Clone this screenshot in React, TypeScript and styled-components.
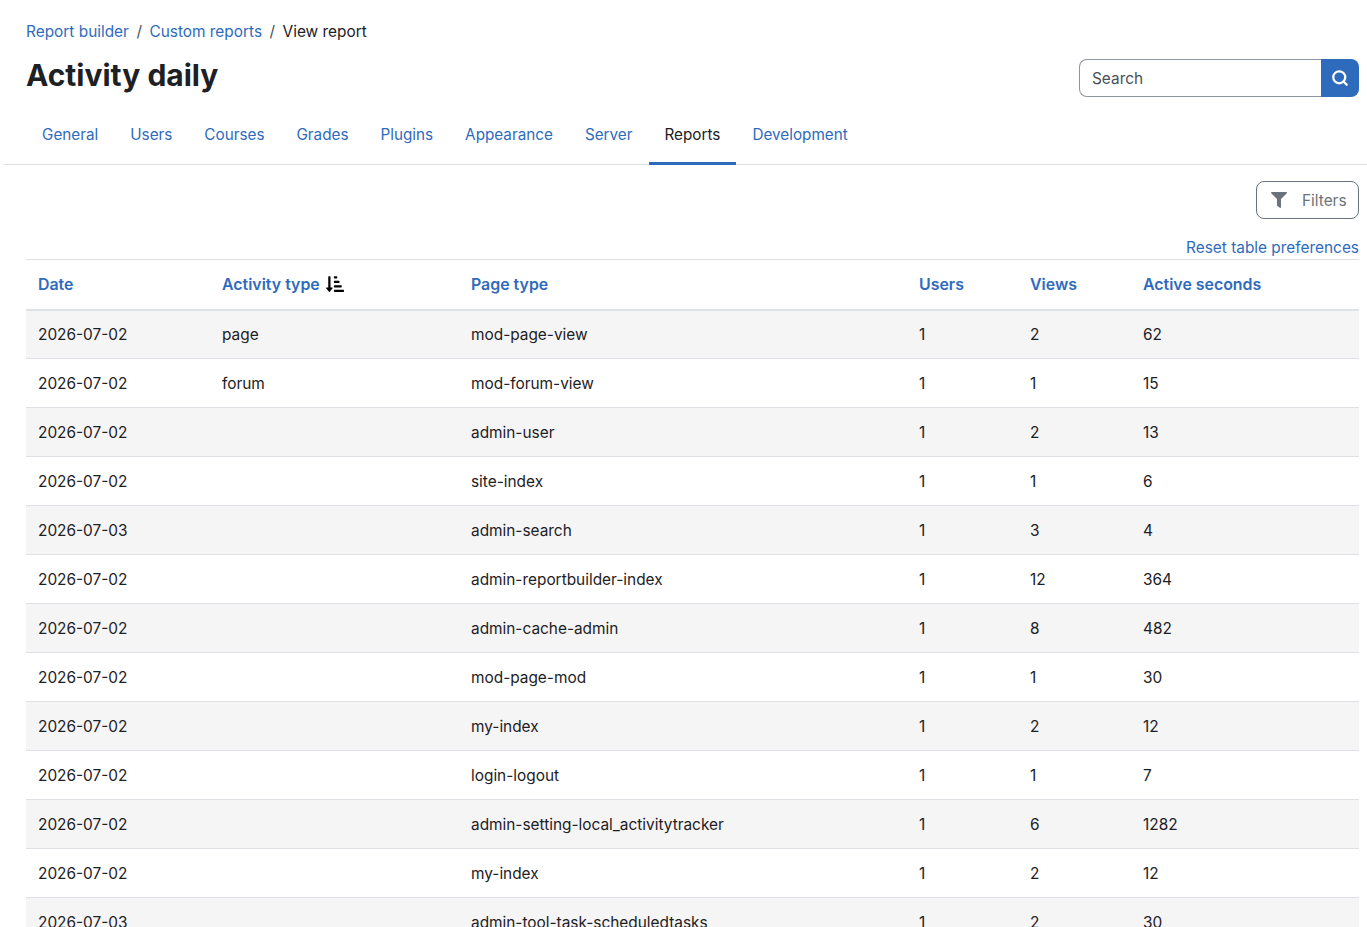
import { FaFilter, FaSortAmountDownAlt } from "react-icons/fa";
import { Search } from "lucide-react";
import styled, { createGlobalStyle } from "styled-components";

const GlobalStyle = createGlobalStyle`
  html, body {
    margin: 0;
    height: 927px;
    overflow: hidden;
    background: #fff;
  }
  body {
    font-family: Inter, "Liberation Sans", sans-serif;
    font-size: 15.4px;
    line-height: 22.5px;
    color: #1d2125;
  }
`;

const Page = styled.div`
  width: 1367px;
  padding-top: 21px;
`;

const Header = styled.header`
  display: flex;
  justify-content: space-between;
  align-items: flex-end;
  padding: 0 8px 0 26px;
`;

const Breadcrumb = styled.nav`
  display: flex;
  gap: 7.5px;
  height: 23px;
`;

const Crumb = styled.a`
  color: #2f6bbd;
`;

const Sep = styled.span`
  color: #495057;
`;

const Title = styled.h1`
  margin: 13px 0 4px;
  font-size: 30px;
  line-height: 36px;
  font-weight: 700;
`;

const SearchBox = styled.div`
  display: flex;
  width: 280px;
  height: 38px;
`;

const SearchInput = styled.div`
  flex: 1;
  box-sizing: border-box;
  border: 1px solid #8f959e;
  border-right: 0;
  border-radius: 8px 0 0 8px;
  padding: 8px 12px 0;
  color: #495057;
`;

const SearchButton = styled.div`
  width: 38px;
  display: flex;
  align-items: center;
  justify-content: center;
  background: #2f6bbd;
  color: #fff;
  border-radius: 0 8px 8px 0;
`;

const Tabs = styled.nav`
  display: flex;
  margin: 13px 0 0 3px;
  padding-left: 23px;
  border-bottom: 1px solid #dee2e6;
  font-size: 15.27px;
`;

const Tab = styled.a<{ $active?: boolean }>`
  padding: 14px 16px 15px;
  height: 23px;
  margin-bottom: -1px;
  color: ${(p) => (p.$active ? "#1d2125" : "#2f6bbd")};
  border-bottom: 3px solid ${(p) => (p.$active ? "#2f6bbd" : "transparent")};
`;

const Content = styled.main`
  padding: 16px 8px 0 26px;
`;

const FilterRow = styled.div`
  display: flex;
  justify-content: flex-end;
`;

const FilterButton = styled.div`
  box-sizing: border-box;
  width: 103px;
  height: 38px;
  display: flex;
  align-items: center;
  gap: 15px;
  padding-left: 14px;
  border: 1px solid #6a737b;
  border-radius: 8px;
  color: #6a737b;
`;

const FilterLabel = styled.span`
  padding-top: 2px;
`;

const ResetRow = styled.div`
  display: flex;
  justify-content: flex-end;
  margin-top: 18px;
  height: 22px;
  color: #2f6bbd;
`;

const Table = styled.table`
  width: 1333px;
  table-layout: fixed;
  border-collapse: collapse;
`;

const HeadCell = styled.th`
  box-sizing: border-box;
  height: 50px;
  padding: 2px 12px 0;
  text-align: left;
  font-weight: 600;
  color: #2f6bbd;
  font-size: 15.9px;
  border-top: 1px solid #dee2e6;
  border-bottom: 2px solid #dee2e6;
  white-space: nowrap;
`;

const SortIcon = styled(FaSortAmountDownAlt)`
  color: #000;
  font-size: 18px;
  margin-left: 6px;
  vertical-align: -3px;
`;

const Row = styled.tr<{ $odd: boolean }>`
  background: ${(p) => (p.$odd ? "#f5f5f5" : "#fff")};
`;

const Cell = styled.td`
  box-sizing: border-box;
  height: 49px;
  padding: 2px 12px 0;
  border-bottom: 1px solid #dee2e6;
`;

const columns = [
  { title: "Date", width: 184 },
  { title: "Activity type", width: 249, sorted: true },
  { title: "Page type", width: 448 },
  { title: "Users", width: 111 },
  { title: "Views", width: 113 },
  { title: "Active seconds", width: 228 },
];

const rows = [
  ["2026-07-02", "page", "mod-page-view", "1", "2", "62"],
  ["2026-07-02", "forum", "mod-forum-view", "1", "1", "15"],
  ["2026-07-02", "", "admin-user", "1", "2", "13"],
  ["2026-07-02", "", "site-index", "1", "1", "6"],
  ["2026-07-03", "", "admin-search", "1", "3", "4"],
  ["2026-07-02", "", "admin-reportbuilder-index", "1", "12", "364"],
  ["2026-07-02", "", "admin-cache-admin", "1", "8", "482"],
  ["2026-07-02", "", "mod-page-mod", "1", "1", "30"],
  ["2026-07-02", "", "my-index", "1", "2", "12"],
  ["2026-07-02", "", "login-logout", "1", "1", "7"],
  ["2026-07-02", "", "admin-setting-local_activitytracker", "1", "6", "1282"],
  ["2026-07-02", "", "my-index", "1", "2", "12"],
  ["2026-07-03", "", "admin-tool-task-scheduledtasks", "1", "2", "30"],
];

const tabs = ["General", "Users", "Courses", "Grades", "Plugins", "Appearance", "Server", "Reports", "Development"];

export default function App() {
  return (
    <Page>
      <GlobalStyle />
      <Header>
        <div>
          <Breadcrumb>
            <Crumb>Report builder</Crumb>
            <Sep>/</Sep>
            <Crumb>Custom reports</Crumb>
            <Sep>/</Sep>
            <span>View report</span>
          </Breadcrumb>
          <Title>Activity daily</Title>
        </div>
        <SearchBox>
          <SearchInput>Search</SearchInput>
          <SearchButton>
            <Search size={18} strokeWidth={3} />
          </SearchButton>
        </SearchBox>
      </Header>
      <Tabs>
        {tabs.map((tab) => (
          <Tab key={tab} $active={tab === "Reports"}>
            {tab}
          </Tab>
        ))}
      </Tabs>
      <Content>
        <FilterRow>
          <FilterButton>
            <FaFilter size={16} />
            <FilterLabel>Filters</FilterLabel>
          </FilterButton>
        </FilterRow>
        <ResetRow>Reset table preferences</ResetRow>
        <Table>
          <colgroup>
            {columns.map((col) => (
              <col key={col.title} width={col.width} />
            ))}
          </colgroup>
          <thead>
            <tr>
              {columns.map((col) => (
                <HeadCell key={col.title}>
                  {col.title}
                  {col.sorted && <SortIcon />}
                </HeadCell>
              ))}
            </tr>
          </thead>
          <tbody>
            {rows.map((row, i) => (
              <Row key={i} $odd={i % 2 === 0}>
                {row.map((value, j) => (
                  <Cell key={j}>{value}</Cell>
                ))}
              </Row>
            ))}
          </tbody>
        </Table>
      </Content>
    </Page>
  );
}
